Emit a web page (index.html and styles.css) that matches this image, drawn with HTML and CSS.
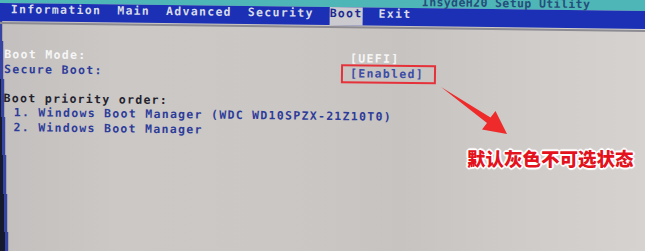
FILE: index.html
```html
<!DOCTYPE html>
<html lang="zh-CN">
<head>
  <meta charset="UTF-8">
  <meta name="viewport" content="width=device-width, initial-scale=1.0">
  <link rel="stylesheet" href="styles.css">
  <title>InsydeH20 Setup Utility</title>
</head>
<body>
  <div class="screen">
    <div class="title-row"><span class="title">InsydeH20 Setup Utility</span></div>

    <div class="menu-bar">
      <span class="menu-item">Information</span>
      <span class="menu-item">Main</span>
      <span class="menu-item">Advanced</span>
      <span class="menu-item">Security</span>
      <span class="menu-item active">Boot</span>
      <span class="menu-item">Exit</span>
    </div>
    <div class="menu-rule"></div>

    <div class="settings">
      <span class="label white">Boot Mode:</span>
      <span class="value white">[UEFI]</span>
      <span class="label blue">Secure Boot:</span>
      <span class="value blue"><span class="marked">[Enabled]</span></span>
      <span class="label">&nbsp;</span>
      <span class="value"></span>
    </div>

    <div class="priority">
      <div class="line dark">Boot priority order:</div>
      <div class="line entry blue"> 1. Windows Boot Manager (WDC WD10SPZX-21Z10T0)</div>
      <div class="line entry blue"> 2. Windows Boot Manager</div>
    </div>
  </div>

  <!-- annotation drawn over the photo -->
  <svg class="arrow" width="645" height="251" viewBox="0 0 645 251">
    <polygon points="441,87 490.5,117.5 495.5,111 507,134 482,129.5 487,123" fill="#ee2a2a"/>
  </svg>
  <div class="note">默认灰色不可选状态</div>
</body>
</html>
```

FILE: styles.css
```css
html, body {
  margin: 0;
  height: 251px;
}

body {
  position: relative;
  overflow: hidden;
  font-family: "DejaVu Sans Mono", "Liberation Mono", monospace;
  font-weight: bold;
  font-size: 11.5px;
  letter-spacing: 1.3px;
  background:
    linear-gradient(88.5deg, #151a2c 0 5px, #3544a2 5px 8px, #a4a3b0 8px 9px, transparent 9px),
    linear-gradient(90deg, #c2bfbe 0, #ccc8c5 18%, #cbc7c4 45%, #c7c3c0 62%, #d0cdca 85%, #d5d2cf 100%);
}

.screen {
  width: 670px;
  transform: rotate(0.7deg);
  transform-origin: 0 0;
}

.title-row {
  height: 15px;
  margin-top: -12px;
  display: flex;
  align-items: flex-end;
  padding-left: 422px;
  background: #4fb6b8;
}

.title {
  line-height: 11px;
  color: #234f7a;
  letter-spacing: 0.4px;
}

.menu-bar {
  display: flex;
  gap: 16px;
  height: 18px;
  padding-left: 11px;
  background: #1b30b4;
  line-height: 12px;
  color: #d9dcea;
}

.menu-item.active {
  background: #cacacf;
  color: #1b2b92;
  height: 18px;
}

.menu-rule {
  height: 2px;
  margin-top: 1px;
  background: #8d8b92;
}

.settings {
  display: grid;
  grid-template-columns: 346px auto;
  padding: 23px 0 0 5px;
  line-height: 14.5px;
}

.priority {
  padding-left: 5px;
  line-height: 14.5px;
}

.line {
  white-space: pre;
}

.entry {
  padding-left: 2px;
}

.white {
  color: #f6f6f6;
}

.blue {
  color: #2d3c9a;
}

.dark {
  color: #22222e;
}

.marked {
  position: relative;
  display: inline-block;
  color: #3c4ca6;
}

.marked::after {
  content: "";
  position: absolute;
  top: -2px;
  bottom: -3px;
  left: -9px;
  right: -12px;
  border: 2px solid #e5323a;
}

.arrow {
  position: absolute;
  left: 0;
  top: 0;
}

.note {
  position: absolute;
  left: 467px;
  top: 149px;
  font-family: "Noto Sans CJK SC", sans-serif;
  font-weight: 900;
  font-size: 18.5px;
  line-height: 1;
  letter-spacing: 0;
  color: #e3121c;
  text-shadow:
    1px 0 0 #fff, -1px 0 0 #fff, 0 1px 0 #fff, 0 -1px 0 #fff,
    1px 1px 0 #fff, -1px -1px 0 #fff, 1px -1px 0 #fff, -1px 1px 0 #fff,
    2px 0 1px #fff, -2px 0 1px #fff, 0 2px 1px #fff, 0 -2px 1px #fff;
}
```
